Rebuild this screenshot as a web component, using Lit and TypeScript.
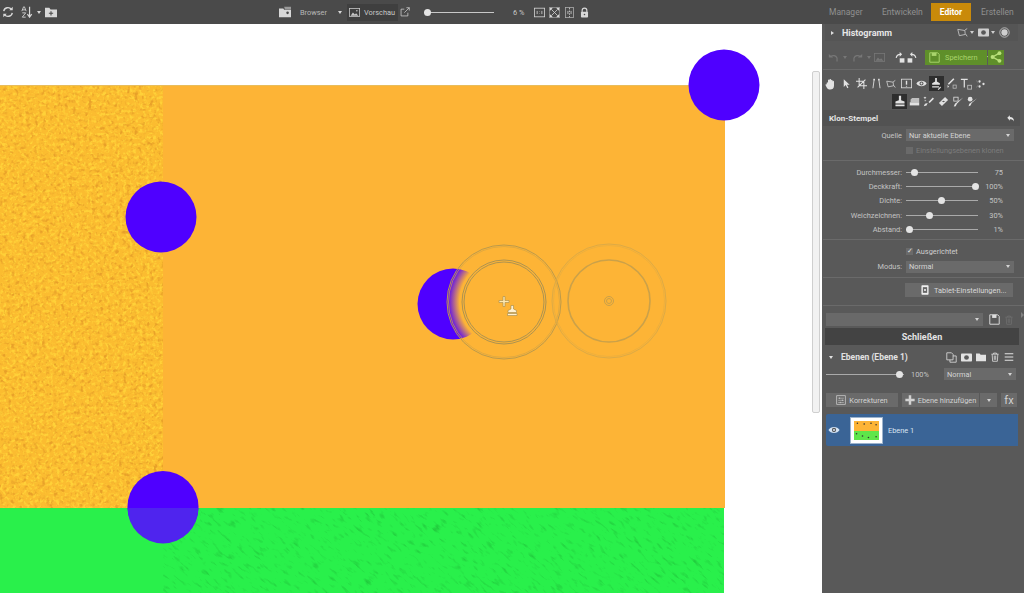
import { LitElement, html, css, svg } from "lit";
import { customElement } from "lit/decorators.js";

const I = (w: number, h: number, body: unknown, cls = "") => html`<svg class="ic ${cls}" width=${w} height=${h} viewBox="0 0 14 14">${body}</svg>`;
const icons: Record<string, unknown> = {
  refresh: svg`<path d="M2 6a5 5 0 0 1 9-2M12 8a5 5 0 0 1-9 2" fill="none" stroke="currentColor" stroke-width="1.6"/><path d="M12.5 1v4h-4zM1.5 13V9h4z" fill="currentColor"/>`,
  sort: svg`<path d="M10 1v11M7.5 9.5 10 13l2.500-3.500" fill="none" stroke="currentColor" stroke-width="1.400"/><path d="M1 6 3 1h1l2 5M2 4.500h3M1.500 8h4L1.500 13h4" fill="none" stroke="currentColor"/>`,
  folderPlus: svg`<path d="M0 2h5l1.500 2H14v9H0z" fill="currentColor"/><path d="M7 6v5M4.500 8.500h5" stroke="#4a4a4a" stroke-width="1.300"/>`,
  browser: svg`<path d="M0 3h5l1 1.500h8V13H0z" fill="currentColor"/><path d="M6 1h8v3H7z" fill="#999"/><circle cx="10" cy="8" r="1.500" fill="#4a4a4a"/>`,
  picture: svg`<rect x=".5" y="2" width="13" height="10" fill="none" stroke="currentColor"/><path d="M2 11l3-4 2.500 2.500L9 8l3 3z" fill="currentColor"/><circle cx="10" cy="4.800" r="1" fill="currentColor"/>`,
  ext: svg`<path d="M6 3H1.500v9.500H11V8M6 8l7-7M9 1h4v4" fill="none" stroke="currentColor"/>`,
  one: svg`<rect x=".5" y="1.500" width="13" height="11" fill="none" stroke="currentColor"/><path d="M4 5v4M10 5v4M7 5.500v.5M7 8v.5" stroke="currentColor"/>`,
  fit: svg`<path d="M1 1h4L1 5zM13 1v4L9 1zM1 13V9l4 4zM13 13H9l4-4z" fill="currentColor"/><rect x=".5" y=".5" width="13" height="13" fill="none" stroke="currentColor" opacity=".5"/><path d="M3 3l8 8M11 3l-8 8" stroke="currentColor"/>`,
  split: svg`<rect x="2" y=".5" width="10" height="13" fill="none" stroke="currentColor" opacity=".7"/><path d="M7 1v12" stroke="currentColor" stroke-dasharray="2 1.500"/><path d="M5 5v4M9 5v4" stroke="currentColor"/>`,
  lock: svg`<path d="M4 6.500V4.500a3 3 0 0 1 6 0v2" fill="none" stroke="currentColor" stroke-width="1.500"/><rect x="2.500" y="6" width="9" height="7.500" rx="1" fill="currentColor"/><circle cx="7" cy="9.500" r="1" fill="#4a4a4a"/>`,
  selection: svg`<path d="M1 3l9 1.500 .5 5L3 11zM10 4l3-2" fill="none" stroke="currentColor"/><path d="M11 9l2 3" stroke="currentColor"/>`,
  mask: svg`<rect y="2" width="14" height="10" rx="1" fill="currentColor"/><circle cx="7" cy="7" r="3" fill="#595959"/>`,
  target: svg`<circle cx="7" cy="7" r="6" fill="none" stroke="currentColor"/><circle cx="7" cy="7" r="4" fill="currentColor"/>`,
  undo: svg`<path d="M3.500 6a5 5 0 0 1 8 1.500V12" fill="none" stroke="currentColor" stroke-width="1.500"/><path d="M1 2.500 6.500 7H1z" fill="currentColor"/>`,
  redo: svg`<path d="M10.500 6a5 5 0 0 0-8 1.500V12" fill="none" stroke="currentColor" stroke-width="1.500"/><path d="M13 2.500 7.500 7H13z" fill="currentColor"/>`,
  photo: svg`<rect x=".5" y="2" width="13" height="10" fill="none" stroke="currentColor"/><path d="M2 11l3-4 2.500 2.500L9 8l3 3z" fill="currentColor"/>`,
  rotL: svg`<path d="M1.500 7.500A5.500 5.500 0 0 1 7 3" fill="none" stroke="currentColor" stroke-width="1.500"/><path d="M6 0v6l3-3z" fill="currentColor"/><rect x="6" y="8" width="6" height="5.500" fill="currentColor"/>`,
  rotR: svg`<path d="M12.500 7.500A5.500 5.500 0 0 0 7 3" fill="none" stroke="currentColor" stroke-width="1.500"/><path d="M8 0v6L5 3z" fill="currentColor"/><rect x="2" y="8" width="6" height="5.500" fill="currentColor"/>`,
  save: svg`<path d="M1 1h10l2 2v10H1z" fill="none" stroke="currentColor" stroke-width="1.200"/><rect x="3.500" y="1" width="6" height="4" fill="currentColor"/>`,
  share: svg`<path d="M11 2.500 3 7l8 4.500" fill="none" stroke="currentColor" stroke-width="1.500"/><circle cx="11" cy="2.500" r="2.300" fill="currentColor"/><circle cx="3" cy="7" r="2.300" fill="currentColor"/><circle cx="11" cy="11.500" r="2.300" fill="currentColor"/>`,
  hand: svg`<path d="M2 7.500V5.500a1 1 0 0 1 1.500 0V2.500a1 1 0 0 1 1.700 0V1.600a1 1 0 0 1 1.800 0v.9a1 1 0 0 1 1.800 0v1.500a1 1 0 0 1 1.700 0V9c0 3-2 4.500-4.500 4.500-2 0-3-1-4-2.500L.7 8.500c-.5-1 .8-1.800 1.300-1z" fill="currentColor"/>`,
  arrow: svg`<path d="M3.500 1.500v10l2.500-2.500 2 4 1.500-.8-2-3.700h3.500z" fill="currentColor"/>`,
  crop: svg`<path d="M4 0v10h10M0 4h10v10M2 12 12 2" fill="none" stroke="currentColor" stroke-width="1.300"/>`,
  curves: svg`<path d="M4 2 2.500 13M10 2l1.500 11" fill="none" stroke="currentColor" stroke-width="1.100"/><rect x="3" y="1" width="2" height="2" fill="currentColor"/><rect x="9" y="1" width="2" height="2" fill="currentColor"/>`,
  frame: svg`<rect x=".5" y="1.500" width="13" height="11" fill="none" stroke="currentColor"/><path d="M7 3.500v5" stroke="currentColor" stroke-width="1.800"/><path d="M7 10v1" stroke="currentColor" stroke-width="1.500"/>`,
  eye: svg`<path d="M.5 7C3 2.500 11 2.500 13.500 7 11 11.500 3 11.500 .5 7z" fill="currentColor"/><circle cx="7" cy="7" r="2.500" fill="#595959"/><circle cx="7" cy="7" r="1.200" fill="currentColor"/>`,
  stampBrush: svg`<path d="M6 0h2v4l3.500 2v2h-9V6L6 4zM2.500 9.500h8v1.500h-8z" fill="currentColor"/><path d="M9.500 13.500l3-3" stroke="currentColor" stroke-width="1.300"/>`,
  healDrop: svg`<path d="M10 1 3 8" stroke="currentColor" stroke-width="2"/><path d="M2 9l2 2-2 1.500z" fill="currentColor"/><rect x="9" y="9" width="4" height="4" fill="none" stroke="currentColor" opacity=".7"/>`,
  text: svg`<path d="M1 1.500h8M5 1.500V11" fill="none" stroke="currentColor" stroke-width="1.400"/><rect x="9" y="8.500" width="4.500" height="4.500" fill="none" stroke="currentColor" opacity=".7"/>`,
  dots: svg`<circle cx="5" cy="3.500" r="1.600" fill="currentColor"/><circle cx="5" cy="10.500" r="1.600" fill="currentColor"/><circle cx="10.500" cy="7" r="1.600" fill="currentColor"/><path d="M1 3l1 1M1 11l1-1" stroke="currentColor"/>`,
  stamp: svg`<path d="M5.700 1h2.600v5l4 1.500V10h-10.600V7.500l4-1.500zM1.700 11h10.600v2H1.700z" fill="currentColor"/>`,
  eraser: svg`<path d="M2 4.500 4 2.500h9V8H2z" fill="currentColor" opacity=".75"/><rect x="1" y="8" width="12" height="4" fill="currentColor"/>`,
  heal: svg`<path d="M12.500 2 7 7.500l1.500 1.500L14 3.500zM6 9l-1.500 3L1 13l1.500-3z" fill="currentColor"/><path d="M1 2h3M2.500 1v3M2 6h2" stroke="currentColor"/>`,
  plaster: svg`<path d="M9 1.200 12.800 5 5 12.800 1.200 9z" fill="currentColor"/><circle cx="7" cy="7" r=".8" fill="#595959"/><circle cx="5.500" cy="7" r=".6" fill="#595959"/><circle cx="8.500" cy="7" r=".6" fill="#595959"/>`,
  redeye: svg`<rect x="1" y="1.500" width="5.500" height="5" fill="none" stroke="currentColor"/><path d="M13 2 5 10l-1.500 3L1 13.500 2.500 10z" fill="currentColor"/>`,
  brush: svg`<circle cx="4" cy="4" r="3" fill="currentColor"/><path d="M13 3 6 9l-1.500 3L2 13l1-3z" fill="currentColor"/>`,
  back: svg`<path d="M2 6l4-4v2.500c4 0 6.500 2 6.500 7C11 8.500 9 8 6 8v2.500z" fill="currentColor"/>`,
  tablet: svg`<rect x="2" y="0.500" width="10" height="13" rx="1" fill="#eee"/><rect x="4" y="3" width="6" height="8" fill="#666"/><circle cx="7" cy="7" r="1.500" fill="#eee"/>`,
  disk: svg`<path d="M1 1h10l2 2v10H1z" fill="none" stroke="currentColor" stroke-width="1.200"/><rect x="4" y="1" width="5.500" height="4" fill="currentColor"/>`,
  trash: svg`<path d="M2 3h10M5 3V1.500h4V3M3 3l.7 10h6.600L11 3M6 5v6M8 5v6" fill="none" stroke="currentColor" stroke-width="1.100"/>`,
  copy: svg`<path d="M1 1h6l2 2v7H1zM9 5h4v8H5v-3" fill="none" stroke="currentColor"/>`,
  folder: svg`<path d="M0 2h5l1.500 2H14v9H0z" fill="currentColor"/>`,
  menu: svg`<path d="M1 2.500h12M1 7h12M1 11.500h12" stroke="currentColor" stroke-width="1.500"/>`,
  adjust: svg`<rect x="1" y="1" width="12" height="12" fill="none" stroke="currentColor"/><path d="M3 4.500h8M3 7.500h8M3 10.500h8" stroke="currentColor" opacity=".7"/><path d="M5 3.500v2M9 6.500v2M6 9.500v2" stroke="currentColor"/>`,
  plus: svg`<path d="M7 .5v13M.5 7h13" stroke="currentColor" stroke-width="3.500"/>`,
};
const ic = (n: string, s = 12, cls = "") => I(s, s, icons[n], cls);

const thumbDots = [[4,3],[12,4],[20,3],[26,5],[3,17],[10,20],[17,22],[26,21]];

@customElement("app-root")
export class AppRoot extends LitElement {
  static styles = css`
    :host { display: block; width: 1024px; height: 593px; overflow: hidden; font-family: Roboto, "Open Sans", "Liberation Sans", sans-serif; font-size: 7.400px; color: #cfcfcf; background: #595959; white-space: nowrap; }
    * { box-sizing: border-box; }
    .ic { display: block; flex: none; }
    .caret { width: 0; height: 0; flex: none; border-left: 2.500px solid transparent; border-right: 2.500px solid transparent; border-top: 3px solid currentColor; }
    .tb { height: 24px; background: #4a4a4a; display: flex; align-items: center; color: #d8d8d8; }
    .tl { width: 279px; padding-left: 2px; display: flex; align-items: center; }
    .tc { width: 543px; display: flex; align-items: center; }
    .tr { flex: 1; display: flex; align-items: center; padding-left: 7px; color: #909090; font-size: 8.500px; }
    .ml7 { margin-left: 7px; } .ml4 { margin-left: 4px; }
    .browser { margin-left: 9px; width: 38px; color: #b8b8b8; }
    .w4 { width: 5px; flex: none; }
    .prev { width: 51px; height: 17px; background: #3f3f3f; display: flex; align-items: center; gap: 4px; padding-left: 2px; color: #c8c8c8; flex: none; }
    .ext { margin-left: 2px; }
    .tslider { position: relative; margin-left: 14px; width: 70px; height: 8px; flex: none; }
    .tslider::before { content: ""; position: absolute; left: 0; right: 0; top: 3.500px; height: 1px; background: #c8c8c8; }
    .knob { position: absolute; width: 7px; height: 7px; border-radius: 50%; background: #e4e4e4; }
    .tslider .knob { left: 0; top: .5px; }
    .pct { margin-left: 19px; width: 21px; color: #c8c8c8; flex: none; }
    .gap3 { display: flex; align-items: center; gap: 4px; }
    .tab { flex: none; }
    .t1 { width: 53px; } .t2 { width: 49px; }
    .tab.on { margin-right: 10px; width: 40px; height: 18px; background: #c98a0a; color: #fff; font-weight: 700; display: flex; align-items: center; justify-content: center; }

    .main { display: flex; height: 569px; }
    .canvas { position: relative; width: 822px; background: #fff; overflow: hidden; }
    .canvas > svg { position: absolute; left: 0; top: 0; }
    .sb { position: absolute; left: 812px; top: 47px; width: 8px; height: 342px; background: #f2f2f2; border: 1px solid #cfcfcf; border-radius: 2px; }

    .panel { width: 202px; background: #595959; position: relative; }
    .hist { margin: 0 6px 0 3px; height: 17px; display: flex; align-items: center; background: #555; color: #e6e6e6; }
    .hist b { margin-left: 8px; font-size: 9px; width: 115px; }
    .hist .tri { margin-left: 6px; width: 0; height: 0; border-top: 2.500px solid transparent; border-bottom: 2.500px solid transparent; border-left: 3px solid #ddd; }
    .hist .gap3 { color: #cfcfcf; gap: 2px; }
    .acts { margin-top: 7px; height: 18px; padding-left: 6px; display: flex; align-items: center; color: #777; }
    .acts .rot { margin-left: 10px; display: flex; color: #e4e4e4; width: 22px; justify-content: space-between; }
    .save { margin-left: 8px; width: 62px; height: 15px; background: #5f8f2a; color: #a9d46c; display: flex; align-items: center; padding-left: 4px; gap: 5px; flex: none; }
    .save .caret { margin-left: 4px; color: #cde4a8; }
    .share { width: 16px; height: 15px; margin-left: 1px; background: #5f8f2a; color: #b9e07a; display: flex; align-items: center; justify-content: center; flex: none; }
    hr { border: 0; border-top: 1px solid #6a6a6a; margin: 0 0 0 1px; height: 0; }
    .tools { display: grid; grid-auto-flow: column; grid-auto-columns: 15px; justify-items: center; align-items: center; height: 15px; color: #e2e2e2; padding-left: 1.500px; }
    .tools.r2 { padding-left: 70.500px; margin-top: 2px; grid-auto-columns: 14.600px; height: 16px; }
    .hl { background: #2e2e2e; width: 15px; height: 15px; display: flex; align-items: center; justify-content: center; }
    .head { margin: 1px 4px 0 1px; height: 16px; background: #525252; display: flex; align-items: center; padding: 0 5px 0 6px; justify-content: space-between; color: #e4e4e4; font-weight: 700; font-size: 8px; }
    .row { display: grid; grid-template-columns: 80px 108px; column-gap: 4px; align-items: center; }
    .lab { text-align: right; color: #c4c4c4; }
    .sel { height: 12px; background: #6a6a6a; color: #d4d4d4; display: flex; align-items: center; justify-content: space-between; padding: 0 4px 0 3px; }
    .src { margin-top: 2px; height: 14px; }
    .dim { margin-top: 1px; height: 14px; color: #7c7c7c; }
    .chk { display: flex; align-items: center; gap: 3px; }
    .box { width: 7px; height: 7px; background: #6a6a6a; color: #e2e2e2; font-size: 7px; line-height: 7px; text-align: center; flex: none; }
    .sep { margin-top: 3px; margin-bottom: 4px; }
    .sl { display: grid; grid-template-columns: 80px 72px 21px; column-gap: 4px; height: 14.300px; align-items: center; }
    .sl .val { text-align: right; color: #c4c4c4; }
    .track { position: relative; height: 8px; }
    .track::before { content: ""; position: absolute; left: 0; right: 0; top: 3.500px; height: 1px; background: #aaa; }
    .track .knob { top: .5px; }
    .tablet { margin: 5px 0 0 83px; width: 108px; height: 14px; background: #6a6a6a; display: flex; align-items: center; gap: 4px; padding-left: 15px; color: #d8d8d8; }
    .preset { margin-top: 7px; display: flex; align-items: center; height: 13px; padding-left: 4px; color: #ddd; }
    .preset .sel { width: 157px; height: 13px; background: #696969; justify-content: flex-end; margin-right: 6px; }
    .trash { color: #6f6f6f; }
    .close { margin: 2px 5px 0 3px; height: 17px; background: #434343; color: #e4e4e4; font-weight: 700; font-size: 9px; display: flex; align-items: center; justify-content: center; }
    .lhead { height: 22px; display: flex; align-items: center; padding-left: 7px; color: #e2e2e2; margin-top: 1px; }
    .lhead b { margin-left: 8px; width: 105px; font-size: 8.500px; flex: none; }
    .lhead .gap3 { gap: 4px; }
    .lopts { height: 12px; display: grid; grid-template-columns: 78px 40px 72px; align-items: center; padding-left: 4px; margin-bottom: 13px; }
    .lopts .val { padding-left: 7px; color: #c4c4c4; }
    .lbtns { display: flex; height: 14px; padding-left: 4px; }
    .btn { background: #6a6a6a; display: flex; align-items: center; color: #d2d2d2; justify-content: center; gap: 3px; height: 14px; flex: none; }
    .b1 { width: 72px; margin-right: 4px; } .b2 { width: 77px; margin-right: 1px; } .b3 { width: 17px; margin-right: 4px; } .b4 { width: 16px; font-size: 11px; }
    .layer { margin: 7px 6px 0 4px; height: 32px; background: #3a6496; display: flex; align-items: center; color: #d9e3f0; border-radius: 2px 0 0 2px; }
    .layer .eye { margin-left: 2px; color: #d5e4f5; }
    .thumb { margin-left: 10px; width: 33px; height: 27px; background: #fff; border: 1px solid #9db3cc; padding: 3px; margin-right: 5px; }
    .thumb svg { display: block; }
    .col { position: absolute; right: 0; top: 288px; width: 0; height: 0; border-top: 3px solid transparent; border-bottom: 3px solid transparent; border-left: 3px solid #808080; }
  `;

  private slider(label: string, pos: number, val: string) {
    return html`<div class="sl"><div class="lab">${label}</div><div class="track"><div class="knob" style="left:${pos}px"></div></div><div class="val">${val}</div></div>`;
  }

  render() {
    return html`
      <div class="tb">
        <div class="tl">${ic("refresh")}<span class="ml7">${ic("sort")}</span><span class="caret ml4"></span><span class="ml4">${ic("folderPlus")}</span></div>
        <div class="tc">
          ${ic("browser")}<span class="browser">Browser</span><span class="caret"></span>
          <span class="w4"></span>
          <div class="prev">${ic("picture", 11)}<span>Vorschau</span></div>
          <span class="ext">${ic("ext", 10)}</span>
          <div class="tslider"><div class="knob"></div></div>
          <span class="pct">6 %</span>
          <div class="gap3">${ic("one", 11)}${ic("fit", 11)}${ic("split", 11)}${ic("lock", 11)}</div>
        </div>
        <div class="tr"><span class="tab t1">Manager</span><span class="tab t2">Entwickeln</span><span class="tab on">Editor</span><span class="tab">Erstellen</span></div>
      </div>
      <div class="main">
        <div class="canvas">
          <svg width="822" height="569" viewBox="0 24 822 569">
            <defs>
              <filter id="ot" x="0" y="0" width="100%" height="100%" color-interpolation-filters="sRGB">
                <feTurbulence type="fractalNoise" baseFrequency="0.26" numOctaves="2" seed="4"/>
                <feColorMatrix type="matrix" values="0 0 0 0 0.91  0 0 0 0 0.63  0 0 0 0 0.16  2.500 2.500 0 0 -2.600"/>
              </filter>
              <filter id="oh" x="0" y="0" width="100%" height="100%" color-interpolation-filters="sRGB">
                <feTurbulence type="fractalNoise" baseFrequency="0.3" numOctaves="2" seed="11"/>
                <feColorMatrix type="matrix" values="0 0 0 0 1  0 0 0 0 0.82  0 0 0 0 0.22  3 3 0 0 -2.900"/>
              </filter>
              <filter id="gt" x="0" y="0" width="100%" height="100%" color-interpolation-filters="sRGB">
                <feTurbulence type="fractalNoise" baseFrequency="0.1 0.35" numOctaves="3" seed="7"/>
                <feColorMatrix type="matrix" values="0 0 0 0 0.13  0 0 0 0 0.80  0 0 0 0 0.24  2 2 0 0 -2.150"/>
              </filter>
              <clipPath id="gc"><rect x="163" y="508" width="561" height="85"/></clipPath>
              <radialGradient id="soft"><stop offset=".78" stop-color="#fdb436"/><stop offset="1" stop-color="#fdb436" stop-opacity="0"/></radialGradient>
            </defs>
            <rect x="0" y="85" width="725" height="423" fill="#fdb436"/>
            <rect x="0" y="85" width="725" height="1" fill="#e8bd5c"/>
            <rect x="0" y="86" width="163" height="422" fill="#fbbc30"/>
            <rect x="0" y="86" width="163" height="422" filter="url(#oh)"/>
            <rect x="0" y="86" width="163" height="422" filter="url(#ot)"/>
            <rect x="0" y="508" width="724" height="85" fill="#29f04b"/>
            <g clip-path="url(#gc)"><rect x="100" y="300" width="700" height="500" transform="rotate(40 440 550)" filter="url(#gt)"/></g>
            <circle cx="724" cy="85" r="35.500" fill="#4f00ff"/>
            <circle cx="161" cy="217" r="35.500" fill="#4f00ff"/>
            <circle cx="453" cy="304" r="35.500" fill="#4f00ff"/>
            <circle cx="163" cy="506.500" r="35.500" fill="#4f00ff"/>
            <path d="M127.500 508a35.500 35.500 0 0 0 71 0z" fill="#4f24ee"/>
            <circle cx="504" cy="302" r="57" fill="url(#soft)"/>
            <g fill="none">
              <circle cx="504" cy="302" r="57" stroke="#bb9a4c" stroke-width="1"/>
              <circle cx="504" cy="302" r="55.500" stroke="#d6a545" stroke-width=".7"/>
              <circle cx="504" cy="302" r="42" stroke="#a48e54" stroke-width=".9"/>
              <circle cx="504" cy="302" r="40" stroke="#a48e54" stroke-width=".9"/>
              <circle cx="609" cy="301" r="57" stroke="#dcaa46" stroke-width="1"/>
              <circle cx="609" cy="301" r="55.500" stroke="#e6ad40" stroke-width=".7"/>
              <circle cx="609" cy="301" r="41" stroke="#cba149" stroke-width="1.600"/>
              <circle cx="609" cy="301" r="4.500" stroke="#c9a04a"/>
              <circle cx="609" cy="301" r="2.500" stroke="#c9a04a"/>
            </g>
            <path d="M503 296.500h2v4h4v2h-4v4h-2v-4h-4v-2h4z" fill="#ffe9b0" stroke="#a08a50" stroke-width=".6"/>
            <path d="M511 305.500h2.500v3.500l3 1.500v2h-8.500v-2l3-1.500zM507.500 313.500h9.500v2h-9.500z" fill="#fff1d0" stroke="#8d7a45" stroke-width=".5"/>
          </svg>
          <div class="sb"></div>
        </div>
        <div class="panel">
          <div class="hist"><span class="tri"></span><b>Histogramm</b>
            <div class="gap3">${ic("selection", 11)}<span class="caret"></span><span></span>${ic("mask", 11)}<span class="caret"></span><span></span>${ic("target", 11)}</div>
          </div>
          <div class="acts">
            ${ic("undo", 11)}<span class="caret ml4" style="margin-right:5px"></span>${ic("redo", 11)}<span class="caret ml4" style="margin-right:3px"></span>${ic("photo", 11)}
            <div class="rot">${ic("rotL", 11)}${ic("rotR", 11)}</div>
            <div class="save">${ic("save", 11)}<span>Speichern</span><span class="caret"></span></div>
            <div class="share">${ic("share", 12)}</div>
          </div>
          <hr style="margin-top:3px;margin-bottom:6px" />
          <div class="tools">
            ${ic("hand", 12)}${ic("arrow", 11)}${ic("crop", 11)}${ic("curves", 11)}${ic("selection", 10)}${ic("frame", 11)}${ic("eye", 11)}
            <span class="hl">${ic("stampBrush", 12)}</span>${ic("healDrop", 11)}${ic("text", 12)}${ic("dots", 10)}
          </div>
          <div class="tools r2"><span class="hl">${ic("stamp", 12)}</span>${ic("eraser", 11)}${ic("heal", 11)}${ic("plaster", 11)}${ic("redeye", 11)}${ic("brush", 11)}</div>
          <div class="head"><span>Klon-Stempel</span>${ic("back", 9)}</div>
          <div class="row src"><div class="lab">Quelle</div><div class="sel"><span>Nur aktuelle Ebene</span><span class="caret"></span></div></div>
          <div class="row dim"><span></span><div class="chk"><span class="box"></span><span>Einstellungsebenen klonen</span></div></div>
          <hr class="sep" />
          ${this.slider("Durchmesser:", 5, "75")}
          ${this.slider("Deckkraft:", 66, "100%")}
          ${this.slider("Dichte:", 32, "50%")}
          ${this.slider("Weichzeichnen:", 20, "30%")}
          ${this.slider("Abstand:", 0, "1%")}
          <hr style="margin-top:3px;margin-bottom:5px" />
          <div class="row" style="height:13px"><span></span><div class="chk"><span class="box">✓</span><span>Ausgerichtet</span></div></div>
          <div class="row" style="height:15px;margin-top:1px"><div class="lab">Modus:</div><div class="sel"><span>Normal</span><span class="caret"></span></div></div>
          <hr style="margin-top:3px" />
          <div class="tablet">${ic("tablet", 10)}<span>Tablet-Einstellungen...</span></div>
          <hr style="margin-top:8px" />
          <div class="preset"><div class="sel"><span class="caret"></span></div>${ic("disk", 11)}<span class="trash ml4">${ic("trash", 10)}</span></div>
          <div class="close">Schließen</div>
          <div class="lhead"><span class="caret"></span><b>Ebenen (Ebene 1)</b>
            <div class="gap3">${ic("copy", 11)}${ic("mask", 11)}${ic("folder", 10)}${ic("trash", 10)}${ic("menu", 10)}</div></div>
          <div class="lopts"><div class="track"><div class="knob" style="left:70px"></div></div><div class="val">100%</div><div class="sel"><span>Normal</span><span class="caret"></span></div></div>
          <div class="lbtns">
            <div class="btn b1">${ic("adjust", 10)}<span>Korrekturen</span></div>
            <div class="btn b2">${ic("plus", 10)}<span>Ebene hinzufügen</span></div>
            <div class="btn b3"><span class="caret"></span></div>
            <div class="btn b4">fx</div>
          </div>
          <div class="layer"><span class="eye">${ic("eye", 12)}</span>
            <div class="thumb"><svg width="25" height="19" viewBox="0 0 25 19"><rect width="25" height="10" fill="#fdb436"/><rect y="10" width="25" height="9" fill="#5fe64a"/>${thumbDots.map(([x, y]) => svg`<circle cx=${x * 0.85} cy=${y * 0.75} r="0.800" fill="#333"/>`)}</svg></div>
            <span>Ebene 1</span></div>
          <div class="col"></div>
        </div>
      </div>
    `;
  }
}
